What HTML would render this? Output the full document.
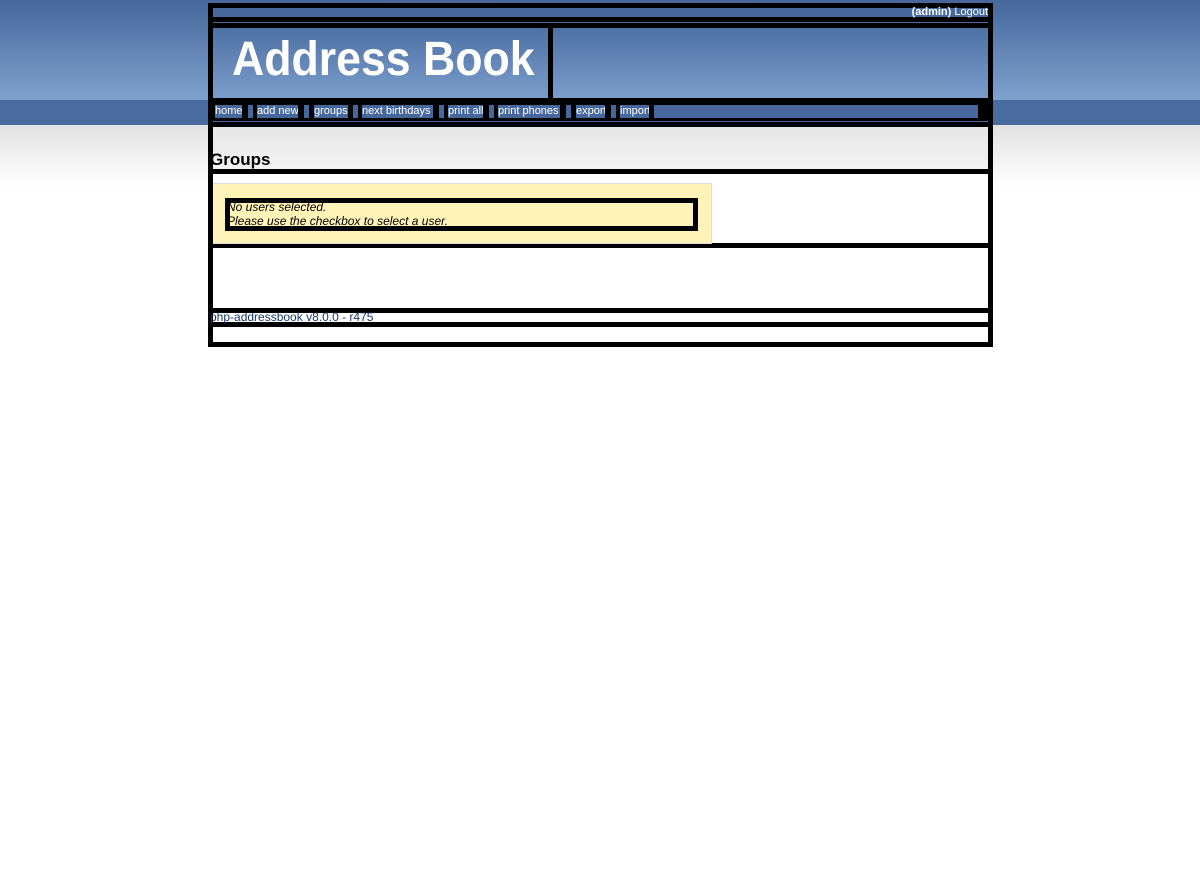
<!DOCTYPE html>
<html><head><style>
body{margin:0;width:1200px;height:890px;position:relative;background:#fff;font-family:"Liberation Sans",Arial,sans-serif;overflow:hidden}
div{position:absolute;box-sizing:border-box}
.b{background:#000}
.nav{top:105px;height:13px;background:#46689c;color:#fff;font-size:11px;line-height:13px;white-space:nowrap;overflow:hidden}
</style></head><body>
<div style="left:0;top:0;width:1200px;height:100px;background:linear-gradient(#46679b,#7fa1ce)"></div>
<div style="left:0;top:100px;width:1200px;height:25px;background:#4a6b9f"></div>
<div style="left:0;top:125px;width:1200px;height:62px;background:linear-gradient(#e2e2e2,#fff)"></div>

<div class="b" style="left:208px;top:3px;width:785px;height:344px"></div>
<div style="left:213px;top:8px;width:775px;height:9px;background:#46689c"></div>
<div style="left:700px;top:5px;width:288px;height:14px;color:#fff;font-size:11px;text-align:right;line-height:14px"><b>(admin)</b> Logout</div>
<div style="left:213px;top:22px;width:775px;height:1px;background:#46689c"></div>
<div style="left:213px;top:28px;width:335px;height:70px;background:linear-gradient(#4e71a4,#7a9dcb)"></div>
<div style="left:232px;top:32px;height:56px;color:#fff;font-size:48px;font-weight:bold;line-height:56px;white-space:nowrap;transform-origin:0 0;transform:scaleX(0.93)">Address Book</div>
<div style="left:553px;top:28px;width:435px;height:70px;background:linear-gradient(#4e71a4,#7a9dcb)"></div>

<div class="nav" style="left:215px;width:27px">home</div>
<div class="nav" style="left:248px;width:5px"></div>
<div class="nav" style="left:257px;width:41px">add new</div>
<div class="nav" style="left:304px;width:5px"></div>
<div class="nav" style="left:314px;width:34px">groups</div>
<div class="nav" style="left:353px;width:5px"></div>
<div class="nav" style="left:362px;width:71px">next birthdays</div>
<div class="nav" style="left:439px;width:5px"></div>
<div class="nav" style="left:448px;width:35px">print all</div>
<div class="nav" style="left:489px;width:5px"></div>
<div class="nav" style="left:498px;width:62px">print phones</div>
<div class="nav" style="left:566px;width:5px"></div>
<div class="nav" style="left:576px;width:29px">export</div>
<div class="nav" style="left:611px;width:5px"></div>
<div class="nav" style="left:620px;width:29px">import</div>
<div class="nav" style="left:654px;width:324px"></div>
<div style="left:213px;top:121px;width:775px;height:1px;background:#46689c"></div>

<div style="left:213px;top:127px;width:775px;height:42px;background:linear-gradient(#e6e6e6,#f3f3f3)"></div>
<div style="left:210px;top:150px;font-size:17px;font-weight:bold;color:#000">Groups</div>
<div style="left:213px;top:174px;width:775px;height:69px;background:#fff"></div>
<div style="left:213px;top:183px;width:499px;height:61px;background:#fff3b8;border:1px solid #ddd;border-left:none"></div>
<div style="left:225px;top:198px;width:473px;height:33px;border:5px solid #000;background:#fff3b8"></div>
<div style="left:227px;top:200px;font-size:12px;font-style:italic;line-height:14px;color:#000">No users selected.<br>Please use the checkbox to select a user.</div>
<div style="left:213px;top:248px;width:775px;height:60px;background:#fff"></div>
<div style="left:213px;top:313px;width:775px;height:9px;background:#fff"></div>
<div style="left:210px;top:310px;font-size:12px;color:#1a3a6b;line-height:14px">php-addressbook v8.0.0 - r475</div>
<div style="left:213px;top:327px;width:775px;height:15px;background:#fff"></div>
</body></html>
